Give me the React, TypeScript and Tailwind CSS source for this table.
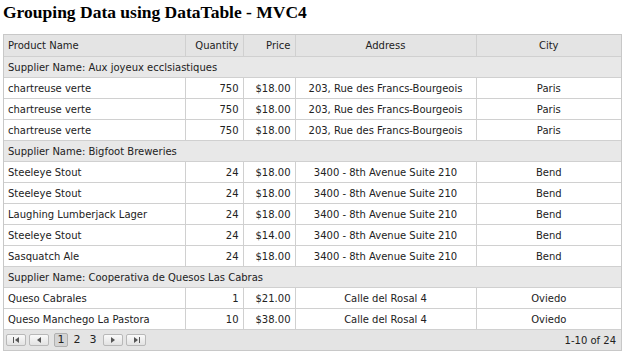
import React from "react";

type Row = { name: string; qty: number; price: string; address: string; city: string };
type Group = { supplier: string; rows: Row[] };

const groups: Group[] = [
  {
    supplier: "Aux joyeux ecclsiastiques",
    rows: [
      { name: "chartreuse verte", qty: 750, price: "$18.00", address: "203, Rue des Francs-Bourgeois", city: "Paris" },
      { name: "chartreuse verte", qty: 750, price: "$18.00", address: "203, Rue des Francs-Bourgeois", city: "Paris" },
      { name: "chartreuse verte", qty: 750, price: "$18.00", address: "203, Rue des Francs-Bourgeois", city: "Paris" },
    ],
  },
  {
    supplier: "Bigfoot Breweries",
    rows: [
      { name: "Steeleye Stout", qty: 24, price: "$18.00", address: "3400 - 8th Avenue Suite 210", city: "Bend" },
      { name: "Steeleye Stout", qty: 24, price: "$18.00", address: "3400 - 8th Avenue Suite 210", city: "Bend" },
      { name: "Laughing Lumberjack Lager", qty: 24, price: "$18.00", address: "3400 - 8th Avenue Suite 210", city: "Bend" },
      { name: "Steeleye Stout", qty: 24, price: "$14.00", address: "3400 - 8th Avenue Suite 210", city: "Bend" },
      { name: "Sasquatch Ale", qty: 24, price: "$18.00", address: "3400 - 8th Avenue Suite 210", city: "Bend" },
    ],
  },
  {
    supplier: "Cooperativa de Quesos Las Cabras",
    rows: [
      { name: "Queso Cabrales", qty: 1, price: "$21.00", address: "Calle del Rosal 4", city: "Oviedo" },
      { name: "Queso Manchego La Pastora", qty: 10, price: "$38.00", address: "Calle del Rosal 4", city: "Oviedo" },
    ],
  },
];

const cell = "border border-[#d0d0d0] px-[4px] h-[21px] py-0 whitespace-nowrap";

function PagerBtn({ children }: { children: React.ReactNode }) {
  return (
    <div className="w-[20px] h-[12px] border border-[#b8b8b8] rounded-[2px] bg-gradient-to-b from-[#fafafa] to-[#e2e2e2] flex items-center justify-center">
      {children}
    </div>
  );
}

export default function App() {
  return (
    <div className="w-[624px] h-[353px] bg-white overflow-hidden" style={{ fontFamily: "'DejaVu Sans', Verdana, sans-serif" }}>
      <h1
        className="text-[17.5px] font-bold leading-none pl-[3px] pt-[4px] text-black"
        style={{ fontFamily: "'Liberation Serif', 'Times New Roman', serif" }}
      >
        Grouping Data using DataTable - MVC4
      </h1>
      <div className="ml-[3px] mt-[12px] w-[619px] border border-[#c8c8c8]">
        <table className="w-full border-collapse text-[10px] text-[#222] table-fixed">
          <colgroup>
            <col className="w-[181px]" />
            <col className="w-[58px]" />
            <col className="w-[52px]" />
            <col className="w-[181px]" />
            <col />
          </colgroup>
          <thead>
            <tr className="bg-[#e4e4e4]">
              <th className={`${cell} h-[22px] text-left font-normal border-t-0 border-l-0`}>Product Name</th>
              <th className={`${cell} h-[22px] text-right font-normal border-t-0`}>Quantity</th>
              <th className={`${cell} h-[22px] text-right font-normal border-t-0`}>Price</th>
              <th className={`${cell} h-[22px] text-center font-normal border-t-0`}>Address</th>
              <th className={`${cell} h-[22px] text-center font-normal border-t-0 border-r-0`}>City</th>
            </tr>
          </thead>
          <tbody>
            {groups.map((g, gi) => (
              <React.Fragment key={gi}>
                <tr className="bg-[#e8e8e8]">
                  <td colSpan={5} className={`${cell} border-l-0 border-r-0`}>
                    Supplier Name: {g.supplier}
                  </td>
                </tr>
                {g.rows.map((r, ri) => (
                  <tr key={ri} className="bg-white">
                    <td className={`${cell} text-left border-l-0`}>{r.name}</td>
                    <td className={`${cell} text-right`}>{r.qty}</td>
                    <td className={`${cell} text-right`}>{r.price}</td>
                    <td className={`${cell} text-center`}>{r.address}</td>
                    <td className={`${cell} text-center border-r-0`}>{r.city}</td>
                  </tr>
                ))}
              </React.Fragment>
            ))}
          </tbody>
        </table>
        <div className="h-[20px] bg-[#e4e4e4] flex items-center px-[2px] text-[10px] text-[#222]">
          <div className="flex items-center gap-[3px]">
            <PagerBtn>
              <svg width="7" height="6" viewBox="0 0 7 6"><rect x="0" y="0" width="1" height="6" fill="#555" /><path d="M6 0 L2 3 L6 6 Z" fill="#555" /></svg>
            </PagerBtn>
            <PagerBtn>
              <svg width="4" height="6" viewBox="0 0 4 6"><path d="M4 0 L0 3 L4 6 Z" fill="#555" /></svg>
            </PagerBtn>
            <div className="flex items-center ml-[2px] gap-[2px]">
              <div className="w-[14px] h-[14px] border border-[#b0b0b0] rounded-[2px] bg-[#d4d4d4] flex items-center justify-center text-[11px]">1</div>
              <div className="w-[14px] h-[14px] flex items-center justify-center text-[11px]">2</div>
              <div className="w-[14px] h-[14px] flex items-center justify-center text-[11px]">3</div>
            </div>
            <PagerBtn>
              <svg width="4" height="6" viewBox="0 0 4 6"><path d="M0 0 L4 3 L0 6 Z" fill="#555" /></svg>
            </PagerBtn>
            <PagerBtn>
              <svg width="7" height="6" viewBox="0 0 7 6"><path d="M1 0 L5 3 L1 6 Z" fill="#555" /><rect x="6" y="0" width="1" height="6" fill="#555" /></svg>
            </PagerBtn>
          </div>
          <div className="ml-auto pr-[3px]">1-10 of 24</div>
        </div>
      </div>
    </div>
  );
}
